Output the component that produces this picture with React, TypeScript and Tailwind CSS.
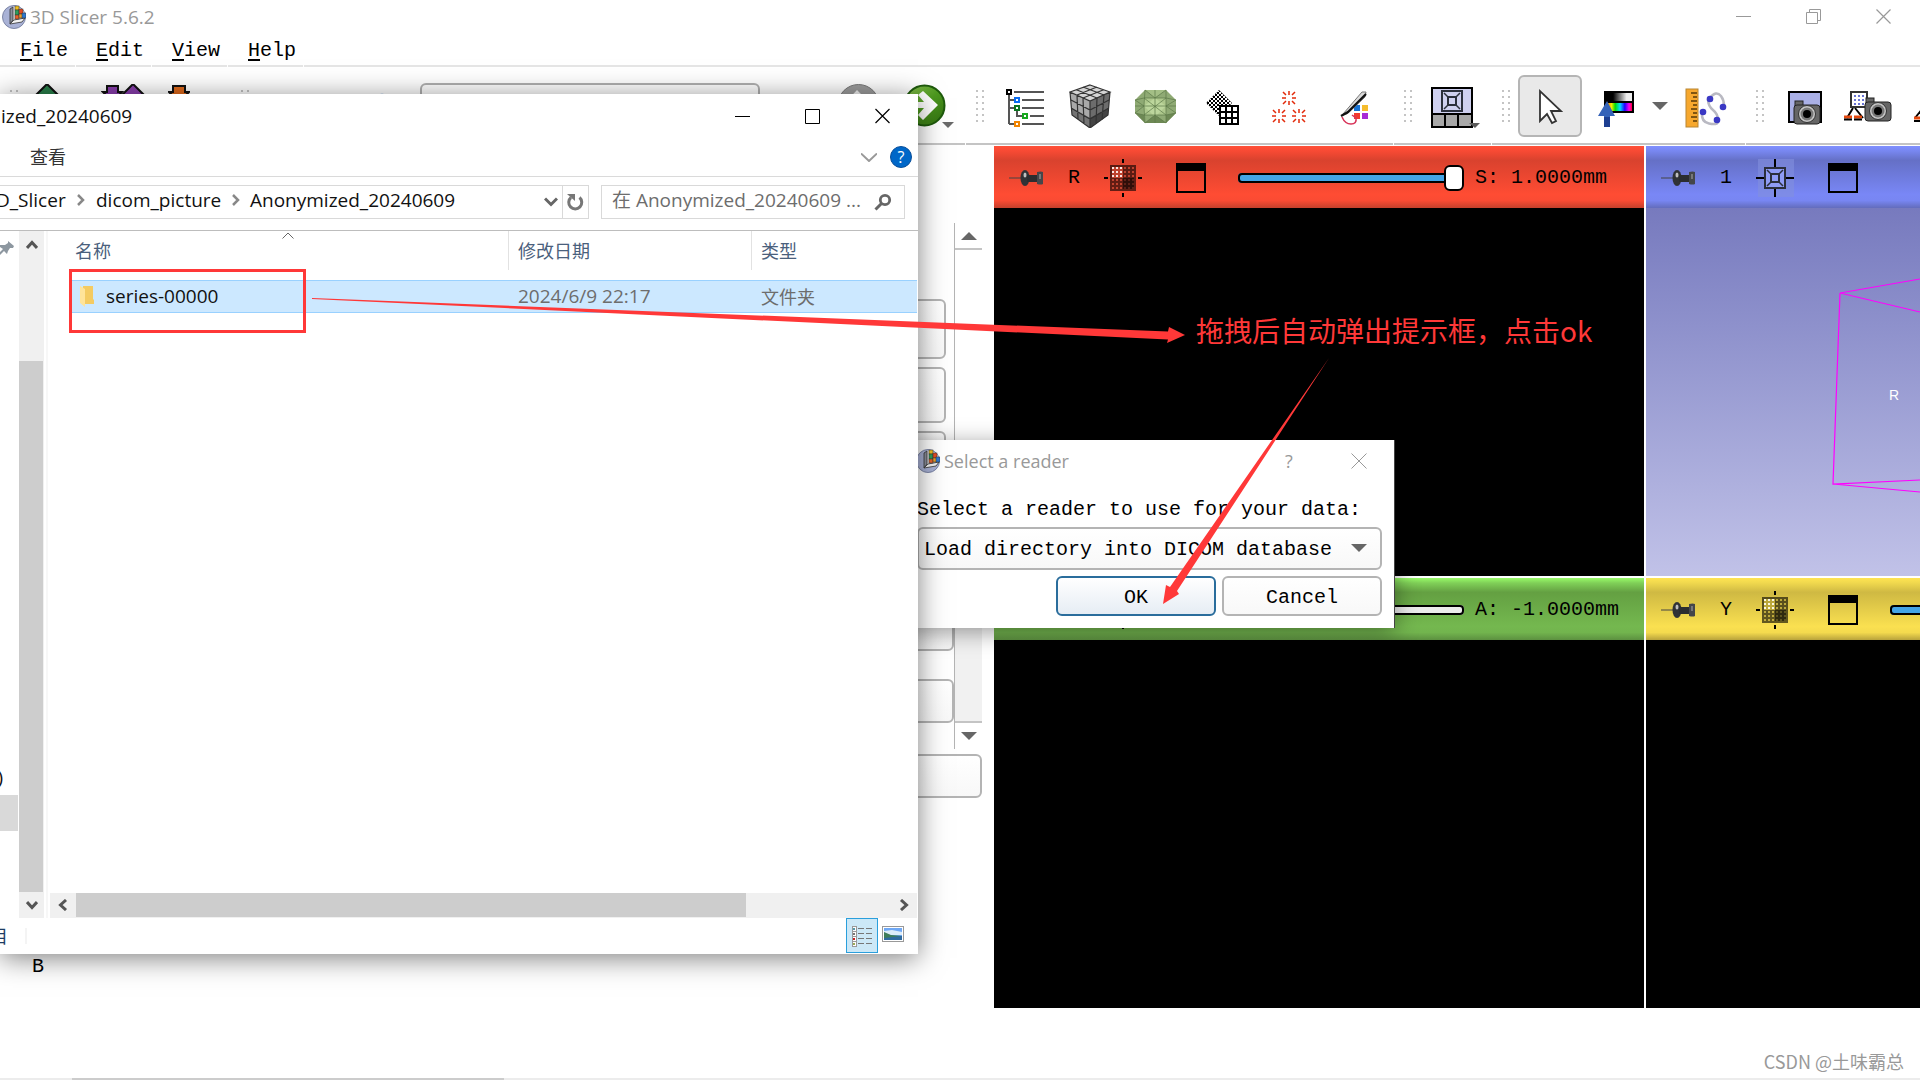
import React from 'react';

const mono = "font-['Liberation_Mono','Noto_Sans_CJK_SC',monospace] text-xl leading-6";
const ui = "font-['Open_Sans','Noto_Sans_CJK_SC',sans-serif]";

function SlicerLogo() {
  return (
    <svg className="h-6 w-6 shrink-0" viewBox="0 0 24 24">
      <circle cx="12" cy="12" r="11.5" fill="#a9b2d6" stroke="#7d86a6" />
      <path d="M10 2 L10 16 L21 13 L22 7 A12 12 0 0 0 10 2Z" fill="#e7e7ea" />
      <path d="M8 4 L11 2 L11 15 L8 19Z" fill="#8b8f9c" stroke="#333" strokeWidth=".8" />
      <path d="M8 19 L12 15 L23 13 L20 17Z" fill="#f4f4f4" stroke="#333" strokeWidth=".8" />
      <rect x="13" y="1" width="4" height="4" fill="#f0c020" stroke="#333" strokeWidth=".5" />
      <rect x="13" y="5" width="4" height="5" fill="#2f9d58" stroke="#333" strokeWidth=".5" />
      <rect x="17" y="4" width="4" height="5" fill="#e64b22" stroke="#333" strokeWidth=".5" />
      <rect x="13" y="10" width="4" height="4" fill="#e8612a" stroke="#333" strokeWidth=".5" />
      <rect x="17" y="9" width="4" height="4" fill="#e8a02a" stroke="#333" strokeWidth=".5" />
      <rect x="20" y="8" width="4" height="5" fill="#2d78cf" stroke="#333" strokeWidth=".5" />
    </svg>
  );
}

function Handle() {
  return (
    <svg className="h-8 w-2 shrink-0" viewBox="0 0 8 32" fill="#c4c4c4" shapeRendering="crispEdges">
      {[0, 6, 12, 18, 24, 30].map((y) => (
        <g key={y}>
          <rect x="0" y={y} width="2" height="2" />
          <rect x="6" y={y} width="2" height="2" />
        </g>
      ))}
    </svg>
  );
}

function CircleArrow({ grey }: { grey?: boolean }) {
  return grey ? (
    <svg className="h-11 w-11" viewBox="0 0 44 44">
      <circle cx="21.500" cy="21" r="20.500" fill="#9c9c9c" stroke="#777" />
      <path d="M31 18h-12l6-7-5-5L6 21l14 14 5-5-6-7h12z" fill="#f2f2f2" />
    </svg>
  ) : (
    <svg className="h-11 w-[52px]" viewBox="0 0 52 44">
      <defs>
        <linearGradient id="gr" x1="0" y1="0" x2="1" y2="1">
          <stop offset="0" stopColor="#8cc152" />
          <stop offset=".5" stopColor="#4d9a1f" />
          <stop offset="1" stopColor="#2f6d0e" />
        </linearGradient>
      </defs>
      <circle cx="21.500" cy="21.500" r="20" fill="url(#gr)" stroke="#1e5a0c" strokeWidth="2" />
      <path d="M10 18h11l-6-7 5-4 15 14-15 15-5-5 6-7H10z" fill="#fff" />
      <path d="M39 38h12l-6 6z" fill="#6a6a6a" />
    </svg>
  );
}

function TreeIcon() {
  const rows: [number, number, string][] = [
    [3, 5, '#000'],
    [11, 13, '#0a6cf0'],
    [11, 21, '#0c7420'],
    [19, 29, '#17a81f'],
    [11, 37, '#f28500'],
  ];
  return (
    <svg className="h-11 w-11" viewBox="0 0 44 44" shapeRendering="crispEdges">
      <path d="M6 10V40M6 16h5M6 24h5M6 40h5M14 26v6h5" stroke="#555" strokeWidth="2" fill="none" />
      {rows.map(([x, y, c]) => (
        <g key={y}>
          <rect x={x + 1} y={y + 1} width="4" height="4" fill="#fff" stroke={c} strokeWidth="2" />
          <rect x={x + 8} y={y + 2} width={33 - x} height="2" fill="#555" />
        </g>
      ))}
    </svg>
  );
}

function CubeIcon() {
  return (
    <svg className="h-11 w-11" viewBox="0 0 44 44">
      <path d="M21 1 41 8 21 17 1 8Z" fill="#d4d4d4" />
      <path d="M1 8 21 17V44L3 31Z" fill="#a9a9a9" />
      <path d="M41 8 21 17V44L39 31Z" fill="#6c6c6c" />
      <path d="M3 24 21 34V44L3 31Z" fill="#747474" />
      <path d="M39 24 21 34V44L39 31Z" fill="#444" />
      <path d="M21 1 41 8 21 17 1 8ZM1 8 3 31 21 44 39 31 41 8M21 17V44M8 11 9 35M14 14 15 40M28 14 27 40M35 11 33 36M2 16 21 26 40 16M2 24 21 35 40 24M14 3 35 11M8 6 28 14M28 3 8 11M34 6 14 14" fill="none" stroke="#333" strokeWidth="1.200" />
    </svg>
  );
}

function PolyIcon() {
  return (
    <svg className="h-11 w-11" viewBox="0 0 44 44">
      <path d="M10 6H31L41 16V29L31 39H10L0 29V16Z" fill="#8faa74" />
      <path d="M9 14H31V31H9Z" fill="#adc78c" />
      <path d="M10 6 20 14 31 6Z" fill="#a4bf86" />
      <path d="M9 22 20 14 31 22 20 33Z" fill="#bcd69c" />
      <path d="M0 29 9 31 10 39ZM41 29 31 31 31 39ZM10 39 20 31 31 39Z" fill="#6d8854" />
      <path d="M10 6 20 14 31 6M0 16 9 22 0 29M41 16 31 22 41 29M10 39 20 31 31 39M9 14 31 31M31 14 9 31M10 6 9 22 10 39M31 6V39M20 6V39M0 22H41M0 16 9 14H31L41 16M0 29 9 31H31L41 29" fill="none" stroke="#5c7848" strokeWidth=".7" />
    </svg>
  );
}

function GridIcon() {
  return (
    <svg className="h-11 w-11" viewBox="0 0 44 44">
      <defs>
        <pattern id="chk" width="4" height="4" patternUnits="userSpaceOnUse">
          <path d="M0 0h2v2H0zM2 2h2v2H2z" fill="#000" />
        </pattern>
      </defs>
      <path d="M18 6 31 19 18 32 5 19Z" fill="url(#chk)" stroke="#777" strokeDasharray="2 2" />
      <g shapeRendering="crispEdges">
        <rect x="19" y="22" width="18" height="18" fill="#fff" stroke="#000" strokeWidth="2" />
        <path d="M25 22V40M31 22V40M19 28H37M19 34H37" stroke="#000" strokeWidth="2" />
      </g>
    </svg>
  );
}

function PointsIcon() {
  return (
    <svg className="h-11 w-11" viewBox="0 0 44 44" stroke="#e22a0a" strokeWidth="1.500">
      {[[22, 14], [12, 32], [32, 32]].map(([x, y]) => (
        <path key={x} fill="none" d={`M${x} ${y - 7}v4M${x} ${y + 3}v4M${x - 3} ${y}h-4M${x + 3} ${y}h4M${x - 3} ${y - 3}l-3-3M${x + 3} ${y - 3}l3-3M${x - 3} ${y + 3}l-3 3M${x + 3} ${y + 3}l3 3`} />
      ))}
    </svg>
  );
}

function BrushIcon() {
  return (
    <svg className="h-11 w-11" viewBox="0 0 44 44">
      <rect x="21" y="21" width="6" height="6" fill="#1673d6" />
      <rect x="29" y="21" width="6" height="6" fill="#f5bd2e" />
      <rect x="21" y="29" width="6" height="6" fill="#f23a2e" />
      <rect x="29" y="29" width="6" height="6" fill="#a82bd6" />
      <path d="M10 30 29 8 33 8 32 13 14 30Z" fill="#dcdcdc" stroke="#777" />
      <path d="M8 32 15 28 33 10" fill="none" stroke="#111" strokeWidth="2.200" />
      <path d="M9 33q3 7 9 7t5-6l-4-3" fill="none" stroke="#d8345a" strokeWidth="1.500" />
    </svg>
  );
}

function BoxGlyph() {
  return (
    <g fill="none" stroke="#2b2f3c">
      <rect x="1" y="1" width="20" height="20" strokeWidth="2" />
      <rect x="7" y="7" width="8" height="8" strokeWidth="2" />
      <path d="M3 3 7 7M19 3 15 7M3 19 7 15M19 19 15 15" strokeWidth="1.500" />
    </g>
  );
}

function LayoutIcon() {
  return (
    <svg className="h-11 w-[52px]" viewBox="0 0 52 44">
      <rect x="3" y="4" width="40" height="39" fill="#a8a8a8" />
      <rect x="3" y="4" width="40" height="26" fill="#cfd0f0" />
      <path d="M3 4H43V43H3ZM3 30H43M16 30V43M29 30V43" stroke="#000" strokeWidth="2" fill="none" />
      <g transform="translate(12 6)"><BoxGlyph /></g>
      <path d="M40 39h11l-5 5z" fill="#5a5a5a" />
    </svg>
  );
}

function CursorIcon() {
  return (
    <svg className="h-11 w-11" viewBox="0 0 44 44">
      <path d="M12 7V37L19 30L24 39L28 37L23 27H33Z" fill="#fff" stroke="#333" strokeWidth="1.800" />
    </svg>
  );
}

function WindowLevelIcon() {
  return (
    <svg className="h-11 w-11" viewBox="0 0 44 44">
      <defs>
        <linearGradient id="bw"><stop offset=".3" stopColor="#000" /><stop offset=".8" stopColor="#eee" /></linearGradient>
        <linearGradient id="rb">
          <stop offset="0" stopColor="#f80" /><stop offset=".15" stopColor="#ee0" /><stop offset=".3" stopColor="#0d0" />
          <stop offset=".5" stopColor="#0df" /><stop offset=".7" stopColor="#20f" /><stop offset=".88" stopColor="#f0e" /><stop offset="1" stopColor="#f03" />
        </linearGradient>
      </defs>
      <rect x="8" y="7" width="30" height="22" fill="#000" />
      <rect x="9" y="9" width="27" height="8" fill="url(#bw)" />
      <rect x="12" y="19" width="24" height="8" fill="url(#rb)" />
      <path d="M11 17 19 32H14V43H8V32H2Z" fill="#3563b8" />
      <path d="M14 33V43H8V33Z" fill="#1d3f91" />
    </svg>
  );
}

function RulerIcon() {
  return (
    <svg className="h-11 w-[46px]" viewBox="0 0 46 44">
      <rect x="2" y="5" width="12" height="38" fill="#f7a82e" stroke="#b98632" />
      <path d="M7 9h6M9 13h4M7 17h6M9 21h4M7 25h6M9 29h4M7 33h6M9 37h4" stroke="#5a3a08" strokeWidth="1.300" />
      <path d="M26 14Q32 6 37 12Q40 16 40 22M24 15Q24 22 29 26T34 36M18 28Q17 38 25 39.500T34 38" fill="none" stroke="#b9b9c2" strokeWidth="2.500" />
      {[[26, 15], [39, 23], [19, 28], [33, 36]].map(([x, y]) => (
        <circle key={y} cx={x} cy={y} r="3.300" fill="#3a38c4" />
      ))}
    </svg>
  );
}

function CameraBody({ x, y }: { x: number; y: number }) {
  return (
    <g transform={`translate(${x} ${y})`}>
      <rect x="1" y="0" width="8" height="6" fill="#666" stroke="#222" />
      <rect x="0" y="4" width="26" height="19" rx="3" fill="#666" stroke="#222" />
      <circle cx="13" cy="13" r="8.500" fill="#c6c6c6" stroke="#333" />
      <circle cx="13" cy="13" r="6.500" fill="#777" />
      <circle cx="13" cy="13" r="4" fill="#000" />
    </g>
  );
}

function SnapshotIcon() {
  return (
    <svg className="h-11 w-11" viewBox="0 0 44 44">
      <rect x="6" y="8" width="32" height="30" fill="#aab0e6" stroke="#000" strokeWidth="2" />
      <CameraBody x={11} y={17} />
    </svg>
  );
}

function SceneIcon() {
  return (
    <svg className="h-11 w-[52px]" viewBox="0 0 52 44">
      <path d="M10 24 4 34M12 24 20 34" stroke="#000" strokeWidth="2" />
      <rect x="8" y="8" width="16" height="15" fill="#fff" stroke="#333" strokeWidth="2" />
      <path d="M11 12h11M11 16h11M11 20h11" stroke="#3947c8" strokeWidth="1.500" strokeDasharray="2 2" />
      <path d="M1 33h8M11 33h8" stroke="#e4490e" strokeWidth="3" />
      <path d="M1 35.500h8M11 35.500h8" stroke="#000" strokeWidth="2" />
      <CameraBody x={22} y={14} />
    </svg>
  );
}

function PinIcon() {
  return (
    <svg className="h-[18px] w-9 shrink-0" viewBox="0 0 36 18">
      <path d="M1 9h12" stroke="#444" />
      <ellipse cx="17" cy="9" rx="4.500" ry="8" fill="#303236" />
      <path d="M19 6h10V13H19z" fill="#2b2d30" />
      <path d="M29 3q4-1 6 0v12q-2 1-6 0z" fill="#44464a" />
      <ellipse cx="17" cy="6" rx="1.500" ry="2.500" fill="#c0c0c0" />
      <path d="M32 5v5" stroke="#999" strokeWidth="1.200" />
    </svg>
  );
}

function SliceIcon({ id, tint }: { id: string; tint: string }) {
  return (
    <svg className="h-[38px] w-[38px]" viewBox="0 0 38 38" shapeRendering="crispEdges">
      <defs>
        <pattern id={id} x="8" y="8" width="4" height="4" patternUnits="userSpaceOnUse">
          <rect width="2" height="2" fill={tint} />
        </pattern>
      </defs>
      <path d="M18 0h2v4h-2zM18 34h2v4h-2zM0 18h4v2H0zM34 18h4v2h-4z" fill="#000" />
      <rect x="6" y="6" width="26" height="26" fill="#000" opacity=".6" />
      <rect x="8" y="8" width="11" height="11" fill={tint} opacity=".6" />
      <rect x="8" y="8" width="22" height="22" fill={`url(#${id})`} opacity=".6" />
      <g fill="#fff" opacity=".85">
        {[8, 12, 16].map((x) => [8, 12, 16].map((y) => <rect key={`${x}-${y}`} x={x} y={y} width="2" height="2" />))}
      </g>
      <rect x="19" y="19" width="11" height="11" fill="#000" opacity=".5" />
    </svg>
  );
}

function ThreeDIcon() {
  return (
    <svg className="h-[38px] w-[38px]" viewBox="0 0 38 38">
      <rect x="2" width="36" height="38" fill="#8290dd" opacity=".6" />
      <path d="M18 0h2v8h-2zM18 30h2v8h-2zM0 18h8v2H0zM30 18h8v2h-8z" fill="#000" />
      <rect x="9" y="9" width="20" height="20" fill="#8f9cf5" />
      <g transform="translate(8 8)"><BoxGlyph /></g>
    </svg>
  );
}

const headerTone: Record<string, string> = {
  red: 'bg-[linear-gradient(#ff5038_0%,#f84a34_8%,#d9422e_23%,#ff4c33_78%,#fa4b33_88%,#c4402c_100%)]',
  blue: 'bg-[linear-gradient(#7f8fff_0%,#7887f0_8%,#6570c6_23%,#7987f6_78%,#7886f2_88%,#636cbc_100%)]',
  green: 'bg-[linear-gradient(#98fb68_0%,#80d058_8%,#64a042_23%,#74b84f_78%,#72b44e_88%,#5c9040_100%)]',
  yellow: 'bg-[linear-gradient(#ffe452_0%,#f0d84e_8%,#cfb943_23%,#fae050_78%,#f4da4e_88%,#b8a23c_100%)]',
};

function ViewHeader({ tone, letter, tint, value, filled }: { tone: string; letter: string; tint?: string; value?: string; filled?: boolean }) {
  return (
    <div className={`flex h-[62px] shrink-0 items-center overflow-hidden pt-px pl-[14px] ${headerTone[tone]}`}>
      <button aria-label="Pin"><PinIcon /></button>
      <span className={`ml-6 w-3 shrink-0 ${mono}`}>{letter}</span>
      <button className="ml-6 shrink-0" aria-label="Center view">
        {tint ? <SliceIcon id={`p-${tone}`} tint={tint} /> : <ThreeDIcon />}
      </button>
      <button className="ml-[34px] h-[30px] w-[30px] shrink-0 border-2 border-t-8 border-black" aria-label="Maximize view" />
      {value !== undefined && (
        <>
          <input
            type="range"
            aria-label={`${letter} slice offset`}
            defaultValue={filled ? 100 : 20}
            className={`ml-8 h-[10px] min-w-[226px] flex-1 appearance-none rounded inset-ring-2 inset-ring-black [&::-webkit-slider-thumb]:h-[26px] [&::-webkit-slider-thumb]:w-5 [&::-webkit-slider-thumb]:appearance-none [&::-webkit-slider-thumb]:rounded-md [&::-webkit-slider-thumb]:border-2 [&::-webkit-slider-thumb]:border-black [&::-webkit-slider-thumb]:bg-white ${filled ? 'bg-[#45a5e6]' : 'bg-[#ececec]'}`}
          />
          <span className={`ml-[11px] w-[169px] shrink-0 whitespace-pre ${mono}`}>{value}</span>
        </>
      )}
    </div>
  );
}

function MainToolbar() {
  const group = 'flex shrink-0 items-center border-b-2 border-[#c4c4c4] pt-[2px]';
  return (
    <div className="flex h-[78px] shrink-0 gap-px overflow-hidden">
      <div className={`${group} w-[965px] pl-[10px]`}>
        <Handle />
        <svg className="ml-[17px] h-11 w-6 shrink-0" viewBox="0 0 24 44"><path d="M12 0 23 11H17V30H7V11H1Z" fill="#2a7f4a" stroke="#111" strokeWidth="2" /></svg>
        <svg className="ml-[42px] h-11 w-11 shrink-0" viewBox="0 0 44 44">
          <path d="M6 2H17V8H21L12 18 2 8H6Z" fill="#8a3fae" stroke="#111" strokeWidth="2" />
          <path d="M32 0 43 11H37V30H27V11H21Z" fill="#8a3fae" stroke="#111" strokeWidth="2" />
        </svg>
        <svg className="ml-[23px] h-11 w-[22px] shrink-0" viewBox="0 0 22 44"><path d="M5 2H17V8H21L11 18 1 8H5Z" fill="#e06a1c" stroke="#111" strokeWidth="2" /></svg>
        <div className="ml-[51px] flex"><Handle /></div>
        <svg className="ml-[127px] h-11 w-3 shrink-0" viewBox="0 0 12 44"><path d="M0 12q6-5 12 0v6H0z" fill="#a9c8ea" /></svg>
        <button className="ml-8 h-[46px] w-[340px] shrink-0 rounded-md border-2 border-[#b0b0b0] pl-[10px]" aria-label="Module">
          <svg className="mb-1 h-6 w-8" viewBox="0 0 32 24"><path d="M0 2h16l3 6H0z" fill="#5b6673" /><path d="M20 2h12v3H20z" fill="#ccc" /></svg>
        </button>
        <button className="ml-[77px] shrink-0" aria-label="Back"><CircleArrow grey /></button>
        <button className="ml-[22px] shrink-0" aria-label="Forward"><CircleArrow /></button>
      </div>
      <div className={`${group} w-[427px] pl-[10px]`}>
        <Handle />
        <div className="ml-[19px] flex gap-[22px]">
          <button aria-label="Subject hierarchy"><TreeIcon /></button>
          <button aria-label="Volume rendering"><CubeIcon /></button>
          <button aria-label="Models"><PolyIcon /></button>
          <button aria-label="Transforms"><GridIcon /></button>
          <button aria-label="Markups"><PointsIcon /></button>
          <button aria-label="Segment editor"><BrushIcon /></button>
        </div>
      </div>
      <div className={`${group} w-[97px] gap-[17px] pl-[10px]`}>
        <Handle />
        <button aria-label="Layout"><LayoutIcon /></button>
      </div>
      <div className={`${group} w-[253px] pl-[10px]`}>
        <Handle />
        <button className="ml-2 flex h-[62px] w-16 items-center justify-center rounded-md border-2 border-[#b5b5b5] bg-[#e9e9e9]" aria-label="Select"><CursorIcon /></button>
        <button className="ml-[14px]" aria-label="Window level"><WindowLevelIcon /></button>
        <button className="ml-[10px]" aria-label="Window level options">
          <svg className="h-2 w-5" viewBox="0 0 20 8"><path d="M2 0h16L10 8z" fill="#666" /></svg>
        </button>
        <button className="ml-[14px]" aria-label="Place markup"><RulerIcon /></button>
      </div>
      <div className="flex min-w-0 flex-1 items-center overflow-hidden border-b-2 border-[#c4c4c4] pt-[2px] pl-[10px]">
        <Handle />
        <button className="ml-[19px] shrink-0" aria-label="Capture screenshot"><SnapshotIcon /></button>
        <button className="ml-4 shrink-0" aria-label="Capture scene"><SceneIcon /></button>
        <button className="ml-[18px] shrink-0" aria-label="Restore scene">
          <svg className="h-11 w-[22px]" viewBox="0 0 22 44"><path d="M2 34 10 24" stroke="#000" strokeWidth="2" /><path d="M1 34h8" stroke="#e4490e" strokeWidth="3" /><path d="M1 37h8" stroke="#000" strokeWidth="2" /></svg>
        </button>
      </div>
    </div>
  );
}

function ModulePanel() {
  const btn = 'w-full shrink-0 rounded-md border-2 border-[#b4b4b4] bg-linear-to-b from-white to-[#f8f8f8]';
  return (
    <div className="flex w-[994px] shrink-0 flex-col pt-[77px] pr-3">
      <div className="flex">
        <div className="flex h-[526px] min-w-0 flex-1 flex-col pt-[76px]">
          <div className="flex flex-col gap-2 pr-2">
            <button className={`${btn} h-[60px]`} aria-label="Import DICOM" />
            <button className={`${btn} h-[56px]`} aria-label="Show DICOM database" />
            <button className={`${btn} h-[56px]`} aria-label="Load data" />
          </div>
          <button className={`${btn} mt-[120px] h-[44px]`} aria-label="Download sample data" />
          <button className={`${btn} mt-7 h-[44px]`} aria-label="Install extensions" />
        </div>
        <div className="flex w-7 shrink-0 flex-col border-l border-[#b4b4b4]">
          <button className="flex h-[27px] items-center justify-center border-b-2 border-[#c4c4c4]" aria-label="Scroll up">
            <svg className="h-2 w-4" viewBox="0 0 16 8"><path d="M0 8h16L8 0z" fill="#666" /></svg>
          </button>
          <div className="flex-1 border-b-2 border-[#c4c4c4] bg-linear-to-b from-white from-75% to-[#f1f1f1] to-75%" />
          <button className="flex h-[26px] items-center justify-center" aria-label="Scroll down">
            <svg className="h-2 w-4" viewBox="0 0 16 8"><path d="M0 0h16L8 8z" fill="#666" /></svg>
          </button>
        </div>
      </div>
      <button className={`${btn} mt-[5px] h-[44px]`} aria-label="Data probe" />
      <div className={`mt-auto mb-[29px] pl-8 ${mono}`}>B</div>
    </div>
  );
}

function Views() {
  return (
    <div className="flex min-w-0 flex-1 gap-[2px] bg-white">
      <div className="flex w-[650px] flex-auto flex-col gap-[2px]">
        <section className="flex flex-1 flex-col bg-black">
          <ViewHeader tone="red" letter="R" tint="#ff5a40" value="S: 1.0000mm" filled />
        </section>
        <section className="flex flex-1 flex-col bg-black">
          <ViewHeader tone="green" letter="G" tint="#7cc653" value="A: -1.0000mm" />
        </section>
      </div>
      <div className="flex w-[274px] shrink-0 flex-col gap-[2px]">
        <section className="flex flex-1 flex-col">
          <ViewHeader tone="blue" letter="1" />
          <div className="relative flex-1 overflow-hidden bg-linear-to-b from-[#777abe] to-[#c1c2e8]">
            <svg className="absolute inset-0 h-[368px] w-[274px]" viewBox="0 0 274 368">
              <path d="M274 71 194 85 274 104M194 85 187 276 274 272M187 276 274 284" fill="none" stroke="#ff00ff" strokeWidth="1.200" />
            </svg>
            <span className="absolute top-[179px] left-[243px] font-['Liberation_Sans',sans-serif] text-sm leading-4 text-white">R</span>
          </div>
        </section>
        <section className="flex flex-1 flex-col bg-black">
          <ViewHeader tone="yellow" letter="Y" tint="#ffe452" value="" filled />
        </section>
      </div>
    </div>
  );
}

function Chevron() {
  return (
    <svg className="ml-3 h-3 w-2 shrink-0" viewBox="0 0 8 12" fill="none">
      <path d="M1 1 6 6 1 11" stroke="#888" strokeWidth="2.500" />
    </svg>
  );
}

function ExplorerWindow() {
  return (
    <div className={`absolute top-[94px] left-0 z-20 flex h-[860px] w-[918px] flex-col bg-white shadow-[0_4px_26px_rgba(0,0,0,0.5)] ${ui} text-[19px] leading-6 text-[#111]`}>
      <div className="flex h-11 shrink-0 items-center pl-px">
        <span className="flex-1">ized_20240609</span>
        <button className="flex w-[70px] justify-center" aria-label="Minimize"><svg className="h-4 w-4" viewBox="0 0 16 16"><path d="M0 8.500h15" stroke="#000" /></svg></button>
        <button className="flex w-[70px] justify-center" aria-label="Maximize"><svg className="h-4 w-4" viewBox="0 0 16 16"><path d="M.5 1.500h14v14H.5z" fill="none" stroke="#000" /></svg></button>
        <button className="flex w-[70px] justify-center" aria-label="Close"><svg className="h-4 w-4" viewBox="0 0 16 16"><path d="M.5 1l14 14M14.500 1l-14 14" stroke="#000" strokeWidth="1.200" /></svg></button>
      </div>
      <div className="flex h-[39px] shrink-0 items-center border-b border-[#dadada] pr-[6px] pl-[30px]">
        <button className="text-lg leading-6 text-[#333]">查看</button>
        <button className="ml-auto" aria-label="Expand ribbon"><svg className="h-[9px] w-4" viewBox="0 0 16 9"><path d="M0 .5 8 8 16 .5" fill="none" stroke="#999" strokeWidth="2" /></svg></button>
        <button className="ml-[13px] flex h-[22px] w-[22px] items-center justify-center rounded-full border border-[#0a4f9a] bg-[#0067c8] text-base leading-5 text-white" aria-label="Help">?</button>
      </div>
      <div className="flex h-[53px] shrink-0 items-center pr-[13px] pb-[3px]">
        <div className="flex h-[34px] w-[589px] items-center border-y border-r border-[#d9d9d9]">
          <div className="flex flex-1 items-center pb-1">
            <a href="#slicer" className="-ml-1 w-[69px]">D_Slicer</a>
            <Chevron />
            <a href="#dicom" className="ml-[11px] w-[124px]">dicom_picture</a>
            <Chevron />
            <a href="#anonymized" className="ml-[10px]">Anonymized_20240609</a>
          </div>
          <button className="mr-1" aria-label="History"><svg className="h-[10px] w-[14px]" viewBox="0 0 14 10"><path d="M1 1.500 7 7.500 13 1.500" fill="none" stroke="#666" strokeWidth="3" /></svg></button>
          <button className="flex h-full w-[26px] items-center justify-center border-l border-[#d9d9d9]" aria-label="Refresh">
            <svg className="h-[18px] w-[17px]" viewBox="0 0 17 18"><path d="M4 4.500A6.500 6.500 0 1 0 12.500 4.500" fill="none" stroke="#777" strokeWidth="3" /><path d="M0 1H8V8Z" fill="#777" /></svg>
          </button>
        </div>
        <label className="ml-3 flex h-[34px] flex-1 items-center border border-[#d9d9d9] pr-3 pl-[10px]">
          <input className="min-w-0 flex-1 pb-1 text-[19px] placeholder:text-[#6d6d6d]" aria-label="Search" placeholder="在 Anonymized_20240609 ..." />
          <svg className="ml-1 h-[18px] w-[18px] shrink-0" viewBox="0 0 18 18" fill="none" stroke="#666"><circle cx="11" cy="7" r="4.700" strokeWidth="2.800" /><path d="M8 10 1.500 16.500" strokeWidth="3" /></svg>
        </label>
      </div>
      <div className="flex min-h-0 flex-1 border-t border-[#bdbdbd]">
        <div className="flex w-[19px] shrink-0 flex-col overflow-hidden pt-2">
          <svg className="h-[18px] w-[14px]" viewBox="0 0 14 18"><path d="M8 2 14 7 13 9 10 9 8 12 7 15 4 12 0 16 0 13 3 10 0 8 0 6 5 6 8 4Z" fill="#8d97a0" /></svg>
          <span className="mt-[508px] flex h-6 w-[3px] justify-end overflow-hidden">)</span>
          <div className="mt-[6px] h-9 w-[18px] bg-[#d9d9d9]" />
        </div>
        <div className="flex w-[25px] shrink-0 flex-col bg-[#f0f0f0]">
          <button className="flex h-[130px] justify-center pt-[9px]" aria-label="Scroll tree up"><svg className="h-[10px] w-3" viewBox="0 0 12 10"><path d="M1 8 6 2.500 11 8" fill="none" stroke="#555" strokeWidth="3" /></svg></button>
          <div className="mr-px flex-1 bg-[#cdcdcd]" />
          <button className="flex h-[26px] items-center justify-center" aria-label="Scroll tree down"><svg className="h-[10px] w-3" viewBox="0 0 12 10"><path d="M1 2 6 7.500 11 2" fill="none" stroke="#555" strokeWidth="3" /></svg></button>
        </div>
        <div className="ml-[2px] flex min-w-0 flex-1 flex-col border-l-2 border-[#f7f7f7] pr-px">
          <div className="min-h-0 flex-1 pl-[22px]">
            <table className="w-full table-fixed border-separate border-spacing-0 text-left">
              <thead>
                <tr className="h-[39px] text-lg leading-6 text-[#4a607c]">
                  <th className="relative w-[439px] border-r border-[#e2e2e2] pl-[5px] font-normal">
                    名称
                    <svg className="absolute top-px left-[212px] h-[7px] w-3" viewBox="0 0 12 7"><path d="M.5 6.500 6 1 11.500 6.500" fill="none" stroke="#666" /></svg>
                  </th>
                  <th className="w-[243px] border-r border-[#e2e2e2] pl-[9px] font-normal">修改日期</th>
                  <th className="pl-[9px] font-normal">类型</th>
                </tr>
              </thead>
              <tbody>
                <tr aria-hidden="true"><td className="h-[10px] p-0" colSpan={3} /></tr>
                <tr className="h-[33px] bg-[#cce8ff] text-[#6d6d6d]">
                  <td className="border-y border-[#99d1ff] p-0 pb-[2px] pl-[10px]">
                    <span className="flex items-center gap-3">
                      <svg className="h-[22px] w-[14px]" viewBox="0 0 14 22"><path d="M3 1H13V14L14 15V19H3Z" fill="#f4cb62" /><path d="M0 1 5 4V22L0 18Z" fill="#ffe49a" /></svg>
                      <span className="text-[#111]">series-00000</span>
                    </span>
                  </td>
                  <td className="border-y border-[#99d1ff] p-0 pb-[2px] pl-[9px]">2024/6/9 22:17</td>
                  <td className="border-y border-[#99d1ff] p-0 pl-[9px] text-lg leading-6">文件夹</td>
                </tr>
              </tbody>
            </table>
          </div>
          <div className="ml-[2px] flex h-[25px] shrink-0 bg-[#f0f0f0] pb-px">
            <button className="flex w-[26px] items-center justify-center" aria-label="Scroll left"><svg className="h-3 w-[10px]" viewBox="0 0 10 12"><path d="M8 1 2.500 6 8 11" fill="none" stroke="#555" strokeWidth="3" /></svg></button>
            <div className="w-[670px] bg-[#cdcdcd]" />
            <button className="ml-auto flex w-[26px] items-center justify-center" aria-label="Scroll right"><svg className="h-3 w-[10px]" viewBox="0 0 10 12"><path d="M2 1 7.500 6 2 11" fill="none" stroke="#555" strokeWidth="3" /></svg></button>
          </div>
        </div>
      </div>
      <div className="flex h-9 shrink-0 items-center pr-[14px]">
        <span className="flex w-2 justify-end overflow-hidden text-lg leading-6 text-[#1e3c64]">目</span>
        <div className="ml-[17px] h-4 w-[2px] bg-[#f4f4f4]" />
        <button className="ml-auto flex h-[35px] w-8 items-center justify-center self-start border border-[#2a9fdc] bg-[#cce8f7]" aria-label="Details view">
          <svg className="h-[22px] w-[22px]" viewBox="0 0 22 22" shapeRendering="crispEdges">
            {[0, 5, 10, 15].map((y, i) => (
              <g key={y}>
                <rect x="1" y={y + 1} width="4" height="5" fill="#fff" stroke="#999" />
                <rect x="2" y={y + 3} width="2" height="2" fill={['#59a', '#777', '#c22', '#9a5'][i]} />
                <path d={`M7 ${y + 3}h6M15 ${y + 3}h6`} stroke="#777" />
              </g>
            ))}
          </svg>
        </button>
        <button className="mb-1 ml-1" aria-label="Thumbnail view">
          <svg className="h-4 w-[22px]" viewBox="0 0 22 16"><rect x=".5" y=".5" width="21" height="15" fill="#fff" stroke="#999" /><rect x="2" y="2" width="18" height="12" fill="#6fa8f5" /><path d="M2 5 10 4 20 6V9H2Z" fill="#dcecfa" /><path d="M2 6 9 9 20 10V14H2Z" fill="#3f7d5a" /><path d="M2 12 20 10V14H2Z" fill="#2f6aa0" /></svg>
        </button>
      </div>
    </div>
  );
}

function ReaderDialog() {
  return (
    <div role="dialog" aria-label="Select a reader" className="absolute top-[440px] left-[905px] z-10 flex w-[490px] flex-col border-r border-[#444] bg-white px-3 pb-[12px] shadow-[0_4px_22px_rgba(0,0,0,0.4)]">
      <div className={`-mr-3 flex h-[42px] items-center ${ui} text-lg leading-6 text-[#999]`}>
        <div className="-ml-px flex flex-1 items-center gap-1">
          <SlicerLogo />
          <span>Select a reader</span>
        </div>
        <button className="w-[70px] text-center" aria-label="Help">?</button>
        <button className="flex w-[70px] justify-center" aria-label="Close"><svg className="h-4 w-4" viewBox="0 0 16 16"><path d="M.5 .5l15 15M15.500 .5l-15 15" stroke="#999" /></svg></button>
      </div>
      <label htmlFor="reader" className={`mt-4 mb-[5px] text-black ${mono}`}>Select a reader to use for your data:</label>
      <div className="relative">
        <select id="reader" className={`h-[43px] w-full appearance-none rounded-md border-2 border-[#b4b4b4] bg-linear-to-b from-white to-[#f8f8f8] pt-[2px] pl-[5px] text-black ${mono}`}>
          <option>Load directory into DICOM database</option>
        </select>
        <svg className="pointer-events-none absolute top-[17px] right-[15px] h-2 w-4" viewBox="0 0 16 8"><path d="M0 0h16L8 8z" fill="#666" /></svg>
      </div>
      <div className="mt-[6px] flex justify-end gap-[6px]">
        <button className={`h-10 w-40 rounded-md border-2 border-[#2a6d9c] bg-linear-to-b from-white to-[#e6edf4] pt-1 text-black ${mono}`}>OK</button>
        <button className={`h-10 w-40 rounded-md border-2 border-[#b4b4b4] bg-linear-to-b from-white to-[#f8f8f8] pt-1 text-black ${mono}`}>Cancel</button>
      </div>
    </div>
  );
}

export default function App() {
  return (
    <div className="relative flex h-screen flex-col overflow-hidden bg-white text-black">
      <header className={`flex h-[34px] shrink-0 items-center pl-[2px] ${ui} text-[19px] leading-6 text-[#999]`}>
        <SlicerLogo />
        <span className="ml-1 flex-1">3D Slicer 5.6.2</span>
        <button className="flex w-[70px] justify-center" aria-label="Minimize window"><svg className="h-4 w-4" viewBox="0 0 16 16"><path d="M0 7.500h15" stroke="#999" /></svg></button>
        <button className="flex w-[70px] justify-center" aria-label="Restore window"><svg className="h-4 w-4" viewBox="0 0 16 16" fill="none" stroke="#999"><path d="M.5 3.500h11v11H.5zM3.500 3.500V.5h11v11h-3" /></svg></button>
        <button className="flex w-[70px] justify-center" aria-label="Close window"><svg className="h-4 w-4" viewBox="0 0 16 16"><path d="M.5 .5l14 14M14.500 .5l-14 14" stroke="#999" strokeWidth="1.200" /></svg></button>
        <span className="w-px" />
      </header>
      <nav className="flex h-[33px] shrink-0 gap-px">
        {['File', 'Edit', 'View', 'Help'].map((m) => (
          <button key={m} className={`w-[75px] border-b-2 border-[#e5e5e5] pt-[3px] pl-5 text-left ${mono}`}>
            <span className="underline decoration-2 underline-offset-3">{m[0]}</span>{m.slice(1)}
          </button>
        ))}
        <div className="flex-1 border-b-2 border-[#e5e5e5]" />
      </nav>
      <MainToolbar />
      <main className="mt-px flex min-h-0 flex-1">
        <ModulePanel />
        <Views />
      </main>
      <footer className="flex h-[72px] shrink-0 flex-col">
        <div className="flex flex-1 items-center justify-end pt-9 pr-4 font-['Noto_Sans_CJK_SC',sans-serif] text-lg leading-6 text-[#999]">CSDN @土味霸总</div>
        <div className="h-[2px] bg-[#ececec] pl-[72px]"><div className="h-[2px] w-[432px] bg-[#cccccc]" /></div>
      </footer>

      <ReaderDialog />
      <ExplorerWindow />

      <div className="pointer-events-none absolute top-[269px] left-[69px] z-30 h-[64px] w-[237px] border-3 border-[#ff3838]" />
      <svg className="pointer-events-none absolute top-0 left-0 z-30 h-[1080px] w-[1920px]" viewBox="0 0 1920 1080" fill="#ff3838">
        <path d="M312 298 1168 331.500 1169 327 1185 335 1167 343 1168 339.500 312 299Z" />
        <path d="M1329 358 1170 587 1166 585 1163 604 1179 594 1177 591Z" />
      </svg>
      <p className="pointer-events-none absolute top-[310px] left-[1196px] z-30 font-['Noto_Sans_CJK_SC',sans-serif] text-[28px] leading-10 whitespace-nowrap text-[#ff3838]">拖拽后自动弹出提示框，点击ok</p>
    </div>
  );
}
